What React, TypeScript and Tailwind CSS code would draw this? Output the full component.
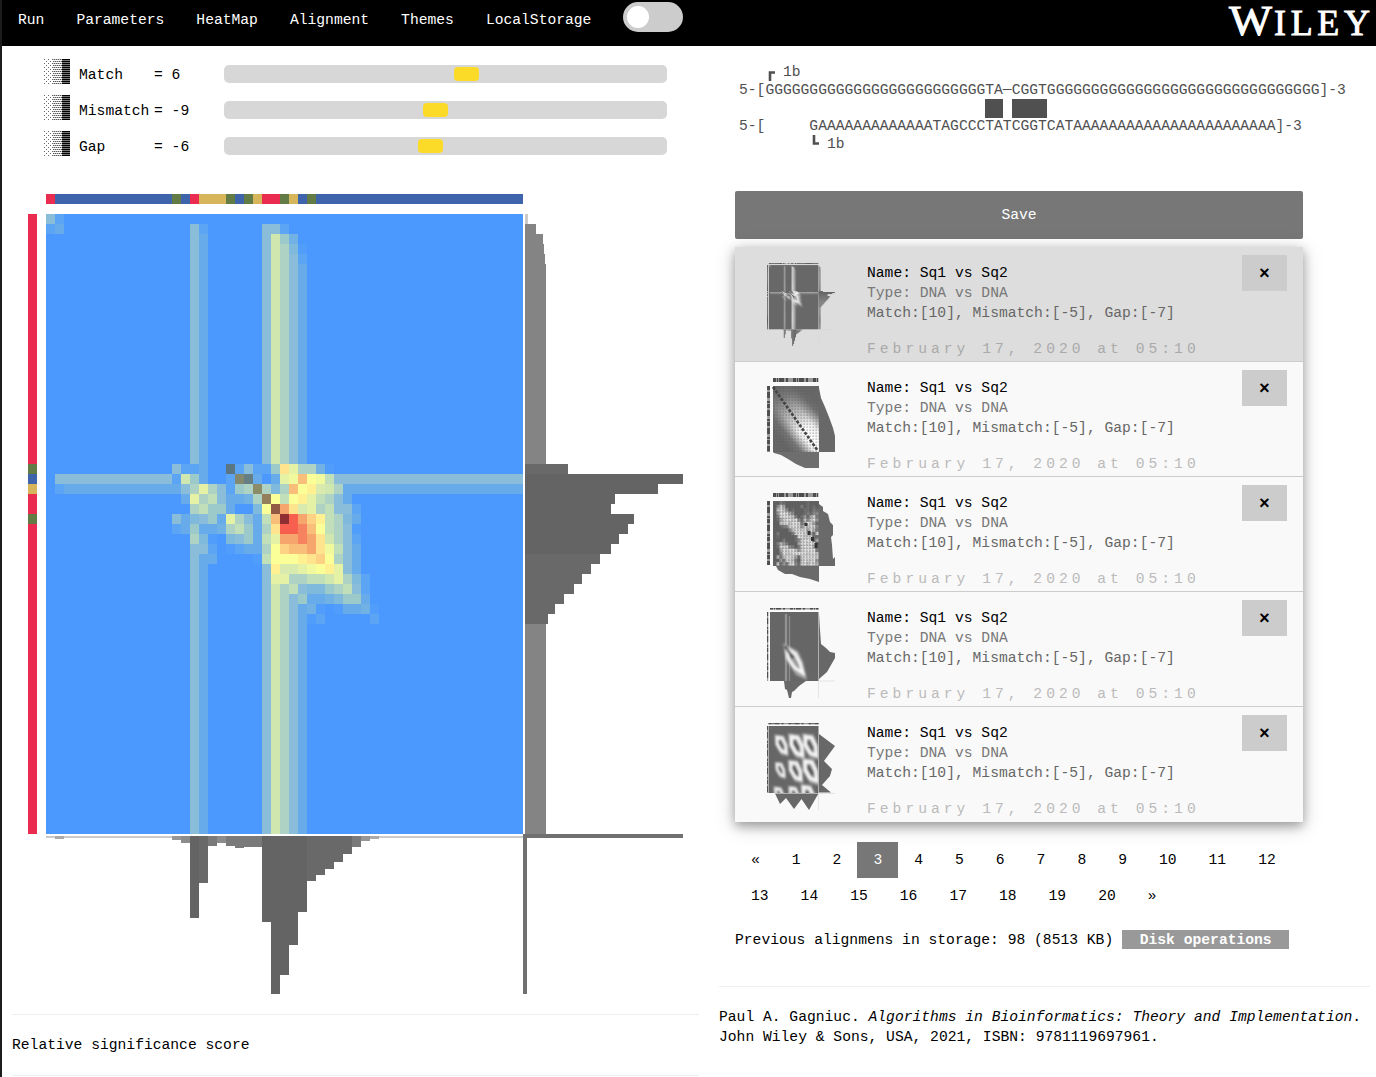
import React from "react";

const COLS = 53;
const ROWS = 62;
const CELL_W = 9;
const CELL_H = 10;

const HEAT: Record<string, string> = {
  "0": "#4b99ff", "1": "#519dfb", "2": "#5ca4f4", "3": "#68abea", "4": "#72b1e3",
  "5": "#7fb9dc", "6": "#8abdd9", "7": "#9ccacb", "8": "#aed3c5", "9": "#c1dfb9",
  A: "#d0e7b0", B: "#d9eaae", C: "#e5f1a5", D: "#f1f99e", E: "#fbff98", F: "#fff192",
  G: "#ffe48d", H: "#fdd284", I: "#fabe7b", J: "#f6a56d", K: "#f6825f", L: "#f7604f",
  a: "#5a7682", b: "#83886e", c: "#657f84", d: "#8b8d68", e: "#937f59", f: "#915a45", g: "#8f2f34",
};

const GREY: Record<string, string> = {
  "0": "#686868", "1": "#6c6c6c", "2": "#787878", "3": "#888", "4": "#909090", "5": "#9c9c9c",
  "6": "#a6a6a6", "7": "#b5b5b5", "8": "#c2c2c2", "9": "#d2d2d2", A: "#e0e0e0", B: "#e4e4e4",
  C: "#ececec", D: "#f2f2f2", E: "#f4f4f4", F: "#f0f0f0", G: "#e6e6e6", H: "#ddd", I: "#ccc",
  J: "#bbb", K: "#aaa", L: "#a0a0a0", a: "#606060", b: "#666", c: "#666", d: "#6b6b6b",
  e: "#666", f: "#585858", g: "#484848",
};

// Rows 25 to 40 of the score matrix, columns 14 to 36.
const CORE = [
  "62230" + "0a26227GC88410" + "0000",
  "2A730" + "02bc303CDIED96" + "6666",
  "368C8" + "6278d858IEFBA8" + "3333",
  "03C89" + "63348eE9EFC986" + "3000",
  "00897" + "73005EfJGBC896" + "6200",
  "63567" + "3C8639IgLJHF98" + "5300",
  "23733" + "489738GLLKIE98" + "6100",
  "00851" + "056739CJJKJGA8" + "6200",
  "00662" + "012338EHIIJGD9" + "6300",
  "00633" + "000019EEEFGHE8" + "6300",
  "00630" + "000006FBBCDEFC" + "6300",
  "00630" + "000006CC8899AC" + "8520",
  "00630" + "000006A8965578" + "9620",
  "00630" + "000006A8673345" + "7730",
  "00630" + "000006A8634101" + "3341",
  "00630" + "000006A8631200" + "0002",
];

function cellAt(r: number, c: number): string {
  if (r >= 25 && r <= 40 && c >= 14 && c <= 36) return CORE[r - 25][c - 14];
  if (r === 26) return c === 0 ? "0" : "6";
  if (r === 27) return c === 0 ? "0" : c === 1 ? "2" : "3";
  if (r === 0) return c === 0 ? "6" : c === 1 ? "2" : "0";
  if (r === 1) {
    const first: Record<number, string> = { 0: "2", 1: "3", 16: "6", 17: "2", 24: "6", 25: "6", 26: "2" };
    return first[c] ?? "0";
  }
  if (c === 16) return "6";
  if (c === 17) return "3";
  if (c === 24) return "6";
  if (c === 25) return "A";
  if (c === 26) return r === 2 ? "7" : "8";
  if (c === 27) return r === 2 ? "4" : r === 3 ? "5" : "6";
  if (c === 28) return r === 2 ? "0" : r === 3 ? "1" : r === 4 ? "2" : "3";
  return "0";
}

const BASES: Record<string, string> = { R: "#ea2c50", B: "#3e65ab", G: "#637c46", T: "#d7b55a" };
const TOP_SEQ = "RBBBBBBBBBBBBBGBRTTTGBGTRRGTBG".padEnd(COLS, "B");
const LEFT_SEQ = ("R".repeat(25) + "GBTRRG").padEnd(ROWS, "R");

const BOTTOM = [
  2, 3, 2, 2, 2, 2, 2, 2, 2, 2, 2, 2, 2, 2, 4, 7, 82, 47, 10, 7, 10, 12, 11, 11, 86, 158, 139,
  109, 76, 45, 39, 33, 26, 18, 11, 5, 3,
].concat(Array(16).fill(2));
const RIGHT = [3, 11, 18, 19, 20]
  .concat(Array(20).fill(21))
  .concat([43, 158, 133, 90, 86, 109, 103, 94, 86, 75, 66, 57, 49, 39, 30, 23])
  .concat(Array(21).fill(21));

function barTone(v: number) {
  if (v <= 2) return "#cbcbcb";
  if (v === 3) return "#aaaaaa";
  if (v <= 5) return "#969696";
  if (v <= 7) return "#8c8c8c";
  if (v <= 12) return "#7a7a7a";
  if (v <= 21) return "#848484";
  return v > 75 ? "#646464" : "#696969";
}

function Matrix({ palette, mono }: { palette: Record<string, string>; mono?: boolean }) {
  const cells: React.ReactNode[] = [];
  for (let r = 0; r < ROWS; r++) {
    for (let c = 0; c < COLS; c++) {
      const v = cellAt(r, c);
      if (v !== "0")
        cells.push(
          <rect key={r * COLS + c} x={18 + c * CELL_W} y={20 + r * CELL_H} width={mono ? 11 : CELL_W} height={mono ? 12 : CELL_H} fill={palette[v]} />
        );
    }
  }
  const seqFill = (b: string) => (mono ? (b === "B" || b === "R" ? "#555" : "#aaa") : BASES[b]);
  const axis = mono ? "#d4d4d4" : "#707070";
  return (
    <g shapeRendering={mono ? undefined : "crispEdges"}>
      {TOP_SEQ.split("").map((b, i) => (
        <rect key={"t" + i} x={18 + i * CELL_W} y={0} width={CELL_W} height={10} fill={seqFill(b)} />
      ))}
      {LEFT_SEQ.split("").map((b, i) => (
        <rect key={"l" + i} x={0} y={20 + i * CELL_H} width={9} height={CELL_H} fill={seqFill(b)} />
      ))}
      <rect x={18} y={20} width={477} height={620} fill={palette["0"]} />
      {cells}
      {RIGHT.map((v, i) => (
        <rect key={"r" + i} x={497} y={20 + i * CELL_H} width={v} height={CELL_H} fill={i === 0 ? "#cbcbcb" : barTone(v === 11 ? 20 : v)} />
      ))}
      {BOTTOM.map((v, i) => (
        <rect key={"b" + i} x={18 + i * CELL_W} y={642} width={CELL_W} height={v} fill={v === 18 ? "#696969" : barTone(v)} />
      ))}
      <rect x={495} y={640} width={160} height={4} fill={axis} />
      <rect x={495} y={642} width={4} height={158} fill={axis} />
    </g>
  );
}

function ThumbBars({ x, top, thick, height }: { x: number; top: number; thick: number; height: number }) {
  return (
    <>
      <path d={`M${x} ${thick / 2}H51.5`} stroke="#999" strokeWidth={thick} />
      <path d={`M${x} ${thick / 2}H51.5`} stroke="#4d4d4d" strokeWidth={thick} strokeDasharray="3 1 1 1 5 2 2 5" />
      <path d={`M${thick / 2.6} ${top}V${height}`} stroke="#999" strokeWidth={thick / 1.4} />
      <path d={`M${thick / 2.6} ${top}V${height}`} stroke="#4d4d4d" strokeWidth={thick / 1.4} strokeDasharray="4 2 6 3 2 1" />
    </>
  );
}

function ThumbStripes() {
  return (
    <svg width="68" height="86" viewBox="0 0 656 830" preserveAspectRatio="none">
      <Matrix palette={GREY} mono />
    </svg>
  );
}

function ThumbDiagonal() {
  return (
    <svg width="68" height="91" viewBox="0 0 68 91">
      <defs>
        <linearGradient id="dg" gradientUnits="userSpaceOnUse" x1="10" y1="57" x2="48" y2="25">
          <stop offset="0" stopColor="#666" />
          <stop offset="0.16" stopColor="#777" />
          <stop offset="0.36" stopColor="#eee" />
          <stop offset="0.5" stopColor="#fff" />
          <stop offset="0.68" stopColor="#eee" />
          <stop offset="0.9" stopColor="#777" />
          <stop offset="1" stopColor="#6a6a6a" />
        </linearGradient>
        <linearGradient id="dfade" gradientUnits="userSpaceOnUse" x1="6" y1="8" x2="36" y2="52">
          <stop offset="0" stopColor="#606060" />
          <stop offset="0.3" stopColor="#666" stopOpacity="0.85" />
          <stop offset="1" stopColor="#666" stopOpacity="0" />
        </linearGradient>
        <pattern id="grid" width="3" height="3" patternUnits="userSpaceOnUse">
          <rect x="0.5" y="0.5" width="1.3" height="1.3" fill="#555" fillOpacity="0.5" />
        </pattern>
      </defs>
      <ThumbBars x={6} top={8} thick={4} height={73.5} />
      <rect x="6" y="8" width="46" height="66" fill="url(#dg)" />
      <rect x="6" y="8" width="46" height="66" fill="url(#dfade)" />
      <rect x="6" y="8" width="46" height="66" fill="url(#grid)" />
      <path d="M6 9L51 73" stroke="#444" strokeWidth="2.6" strokeDasharray="3 1.6" />
      <path d="M52 10L54 20L58 29L62 39L66 50L68 58V74H52Z" fill="#686868" />
      <path d="M6 74H52V90H38L29 86L21 81L14 77L7 75Z" fill="#6e6e6e" />
    </svg>
  );
}

const NOISE = [
  "002100000001000",
  "038500000201010",
  "079730100011021",
  "049985300012133",
  "028998720141582",
  "015899893173794",
  "007897998259851",
  "001238998487983",
  "000003799895962",
  "020000289989518",
  "010000019988811",
  "000200013899915",
  "026420005898980",
  "018883202899961",
  "005989974899992",
  "003988999998997",
  "062799851899998",
  "004288720798894",
  "071428931897986",
];

function ThumbNoise() {
  return (
    <svg width="68" height="91" viewBox="0 0 68 91">
      <ThumbBars x={6} top={8} thick={4} height={72} />
      <rect x="6" y="8" width="46" height="65" fill="#686868" />
      <g>
        {NOISE.flatMap((row, r) =>
          row.split("").map((v, c) => {
            const n = 96 + Number(v) * 14;
            return (
              <rect key={r * 15 + c} x={6.5 + c * 3} y={8.5 + r * 3.37} width="3.1" height="3.45" fill={`rgb(${n},${n},${n})`} />
            );
          })
        )}
      </g>
      <rect x="6" y="8" width="46" height="65" fill="url(#grid)" />
      <path d="M39 30v3M42 38v4M45.500 44v4M49 50v5" stroke="#333" strokeWidth="3" fill="none" />
      <path d="M52 11L56 14V18L61 21L63 29L66 32V42L64 44L65 52L66 66L68 64V73H52Z" fill="#6a6a6a" />
      <path d="M9 73H52V89L43 86L33 84L25 81L18 81L11 77Z" fill="#6a6a6a" />
    </svg>
  );
}

function ThumbDiamond() {
  return (
    <svg width="68" height="91" viewBox="0 0 68 91">
      <defs>
        <filter id="soft" x="-20%" y="-20%" width="140%" height="140%">
          <feGaussianBlur stdDeviation="0.8" />
        </filter>
      </defs>
      <ThumbBars x={3} top={4} thick={1.6} height={73} />
      <rect x="3" y="4" width="48.500" height="69" fill="#666" />
      <path d="M19 6V73" stroke="#929292" strokeWidth="2.4" />
      <path d="M22.500 8V73" stroke="#8b8b8b" strokeWidth="1.4" />
      <g filter="url(#soft)">
        <path d="M16 35L31 43L36 54L40 72L29 67L19 52Z" fill="#a4a4a4" />
        <path d="M19.500 40L28.500 46L33 55L36 65L28 60L21 50Z" fill="#999" stroke="#f8f8f8" strokeWidth="3" strokeLinejoin="miter" />
        <path d="M18 38L26 50" stroke="#333" strokeWidth="2.400" />
      </g>
      <path d="M52 6L53 22L54 36L59 40L63 44L68 45V50L64 57L60 64L52 71Z" fill="#686868" />
      <path d="M17 73H39L32 78L27 83L25 84L24 90H22L20 82L18 81Z" fill="#686868" />
      <path d="M51.500 73H68M51.500 73V90" stroke="#ddd" strokeWidth="0.8" />
    </svg>
  );
}

function ThumbGrid() {
  const diamonds = [
    [14, 22, 0.95], [29, 23, 1.15], [43, 23, 1.15],
    [13, 47, 0.75], [28, 48, 1.05], [43, 48, 1.2],
    [12, 72, 0.8], [27, 72, 0.85], [41, 73, 1.1],
  ];
  return (
    <svg width="68" height="91" viewBox="0 0 68 91">
      <defs>
        <clipPath id="gridclip"><rect x="1.500" y="3" width="50" height="67" /></clipPath>
      </defs>
      <ThumbBars x={1.5} top={3} thick={1.3} height={70} />
      <rect x="1.500" y="3" width="50" height="67" fill="#666" />
      <g clipPath="url(#gridclip)">
        <g filter="url(#soft)">
          {diamonds.map(([x, y, s], i) => (
            <g key={i} transform={`translate(${x} ${y}) scale(${s})`}>
              <path d="M-7 -11L3 -10L7 0L8 12L0 10L-6 0Z" fill="#aaa" />
              <path d="M-4 -8L1.500 -7L5 0L5.500 8L0 6L-4 -1Z" fill="#858585" stroke="#f6f6f6" strokeWidth="2.800" />
              <path d="M-2 -4L2 3" stroke="#444" strokeWidth="2" />
            </g>
          ))}
        </g>
      </g>
      <path d="M52 11L68 23L57 38L65 46L63 53L55 62L64 69.500H52Z" fill="#686868" />
      <path d="M8 70.500H51.500L42 87L34.500 76L27 86L19 75L13 81Z" fill="#686868" />
      <path d="M51.500 70.500H68M51.500 70.500V87" stroke="#ddd" strokeWidth="0.8" />
    </svg>
  );
}

function ShadeHandle() {
  return (
    <svg width="27" height="25" viewBox="0 0 27 25" shapeRendering="crispEdges">
      <defs>
        <pattern id="light" width="4" height="4" patternUnits="userSpaceOnUse">
          <path d="M0 0h1v1H0zM2 2h1v1H2z" fill="#666" />
        </pattern>
        <pattern id="mid" width="2" height="4" patternUnits="userSpaceOnUse">
          <path d="M0 0h1v1H0zM1 2h1v1H1z" fill="#555" />
          <path d="M1 0h1v1H1zM0 2h1v1H0z" fill="#bbb" />
        </pattern>
        <pattern id="dark" width="3" height="2" patternUnits="userSpaceOnUse">
          <path d="M0 0h3v1H0z" fill="#000" />
          <path d="M0 1h3v1H0z" fill="#777" />
        </pattern>
      </defs>
      <rect width="9" height="25" fill="url(#light)" />
      <rect x="9" width="9" height="25" fill="url(#mid)" />
      <rect x="18" width="8" height="25" fill="url(#dark)" />
    </svg>
  );
}

const PARAMS = [
  { name: "Match", value: "= 6", offset: 230 },
  { name: "Mismatch", value: "= -9", offset: 199 },
  { name: "Gap", value: "= -6", offset: 194 },
];

const NAV = ["Run", "Parameters", "HeatMap", "Alignment", "Themes", "LocalStorage"];
const THUMBS = [ThumbStripes, ThumbDiagonal, ThumbNoise, ThumbDiamond, ThumbGrid];
const PAGES = ["«", ...Array.from({ length: 20 }, (_, i) => String(i + 1)), "»"];

export default function App() {
  return (
    <div className="h-[1077px] w-[1376px] overflow-hidden border-l-2 border-[#1c1c1c] bg-white font-['Liberation_Mono',monospace] text-[14.66px] leading-5 text-black">
      <header className="flex h-[46px] justify-between bg-black text-white">
        <nav className="flex">
          {NAV.map((n) => (
            <a key={n} className="px-4 pt-[10px]">{n}</a>
          ))}
          <div className="mt-0.5 ml-4 flex h-[30px] w-[60px] items-center rounded-full bg-[#ccc] pl-1">
            <span className="size-[22px] rounded-full bg-white" />
          </div>
        </nav>
        <svg width="148" height="44" className="overflow-visible font-['Liberation_Serif',serif]" fill="#fff" stroke="#fff" strokeWidth="0.9">
          <text x="1" y="34.500" fontSize="42" textLength="43" lengthAdjust="spacingAndGlyphs">W</text>
          <text x="46" y="34.500" fontSize="36" textLength="96" lengthAdjust="spacing">ILEY</text>
        </svg>
      </header>

      <div className="flex">
        <main className="w-[717px] shrink-0 pt-[10px] pl-[10px]">
          {PARAMS.map((p) => (
            <div key={p.name} className="flex h-9 items-center pl-8">
              <span className="-mt-1.5"><ShadeHandle /></span>
              <span className="mt-0.5 w-[83px] pl-2">{p.name}</span>
              <span className="mt-0.5 w-[62px]">{p.value}</span>
              <div className="ml-2 flex h-[18px] w-[443px] items-center rounded-[5px] bg-[#d7d7d7]">
                <span className="h-[14px] w-[25px] rounded-[4px] bg-[#fbdb27]" style={{ marginLeft: p.offset }} />
              </div>
            </div>
          ))}
          <svg className="mt-[30px] ml-4 block" width="656" height="800" viewBox="0 0 656 800">
            <Matrix palette={HEAT} />
          </svg>
          <hr className="mt-5 w-[687px] border-[#eee]" />
          <p className="mt-5 whitespace-pre">Relative significance score</p>
          <hr className="mt-5 w-[687px] border-[#eee]" />
        </main>

        <aside className="w-[657px] shrink-0 pt-[17px]">
          <div className="h-32 pl-5 leading-[18px] whitespace-pre text-[#505050]">
            <div className="flex h-[18px]">
              <svg className="mt-2 ml-7" width="9" height="10"><path d="M3 10V1.500H8" fill="none" stroke="#505050" strokeWidth="2.600" /></svg>
              <span className="ml-[7px]">1b</span>
            </div>
            <div>{"5-[" + "G".repeat(25) + "TA─CGGT" + "G".repeat(31) + "]-3"}</div>
            <div className="flex h-[18px] gap-[9px] pl-[246px]">
              <span className="h-[19px] w-[18px] bg-[#505050]" />
              <span className="h-[19px] w-[35px] bg-[#505050]" />
            </div>
            <div>{"5-[     G" + "A".repeat(13) + "TAGCCCTATCGGTCAT" + "A".repeat(23) + "]-3"}</div>
            <div className="flex h-[18px]">
              <svg className="ml-[72px]" width="9" height="10"><path d="M3 0V8.500H8" fill="none" stroke="#505050" strokeWidth="2.600" /></svg>
              <span className="ml-[7px]">1b</span>
            </div>
          </div>

          <section className="ml-4 w-[568px]">
            <button className="flex h-12 w-full items-center justify-center rounded-xs bg-[#777] text-white">Save</button>
            <ul className="mt-2 shadow-[0_4px_10px_0_rgba(0,0,0,0.3),0_4px_20px_0_rgba(0,0,0,0.19)]">
              {THUMBS.map((Thumb, i) => (
                <li
                  key={i}
                  className={
                    "flex h-[115px] border-[#ccc] pr-4 pl-8 " + (i === 0 ? "bg-[#ddd] " : "bg-[#f9f9f9] ") + (i < 4 ? "border-b" : "")
                  }
                >
                  <div className="w-[100px] pt-4"><Thumb /></div>
                  <div className="flex-1 pt-4 whitespace-pre">
                    <p>Name: Sq1 vs Sq2</p>
                    <p className="text-[#777]">Type: DNA vs DNA</p>
                    <p className="text-[#666]">Match:[10], Mismatch:[-5], Gap:[-7]</p>
                    <p className={"mt-4 tracking-[4px] " + (i === 0 ? "text-[#aaa]" : "text-[#bbb]")}>February 17, 2020 at 05:10</p>
                  </div>
                  <button className="mt-2 flex h-9 w-[45px] items-center justify-center bg-[#ccc] pt-0.5 text-[18px] font-bold">×</button>
                </li>
              ))}
            </ul>

            <div className="mt-5 flex flex-wrap">
              {PAGES.map((p) => (
                <a key={p} className={"h-9 px-4 py-2 " + (p === "3" ? "bg-[#777] text-white" : "")}>{p}</a>
              ))}
            </div>

            <div className="mt-4 flex h-5 items-start whitespace-pre">
              <span>Previous alignmens in storage: 98 (8513 KB)</span>
              <button className="ml-[9px] flex h-[19px] w-[167px] items-center justify-center bg-[#999] font-bold text-white">Disk operations</button>
            </div>
          </section>

          <hr className="mt-9 w-[651px] border-[#eee]" />
          <p className="mt-5 whitespace-nowrap">
            Paul A. Gagniuc. <i>Algorithms in Bioinformatics: Theory and Implementation</i>.<br />
            John Wiley &amp; Sons, USA, 2021, ISBN: 9781119697961.
          </p>
        </aside>
      </div>
    </div>
  );
}
